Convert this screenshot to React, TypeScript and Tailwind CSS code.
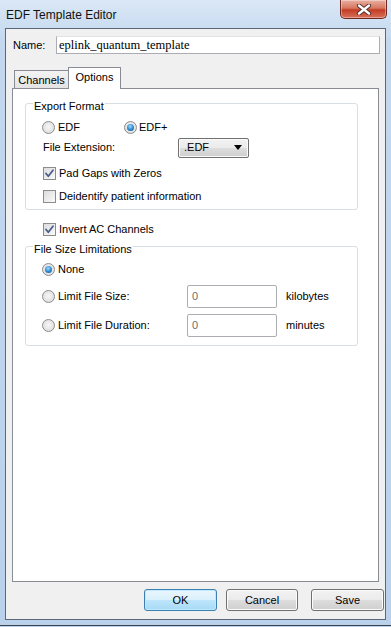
import React from "react";

const FONT = { fontFamily: '"Liberation Sans", Arial, sans-serif' };

function Radio({ checked }: { checked?: boolean }) {
  return (
    <span className="w-[13px] h-[13px] rounded-full border border-[#8c8c8c] bg-[radial-gradient(circle_at_50%_45%,#f6f6f6,#d8d8d8)] flex items-center justify-center shrink-0">
      {checked && (
        <span className="w-[7px] h-[7px] rounded-full bg-[radial-gradient(circle_at_45%_35%,#9ddcff,#2c86cc_55%,#0d4a80)]" />
      )}
    </span>
  );
}

function Check({ checked }: { checked?: boolean }) {
  return (
    <span className="w-[13px] h-[13px] border border-[#8c8c8c] bg-[linear-gradient(135deg,#dcdcdc,#fafafa)] flex items-center justify-center shrink-0">
      {checked && (
        <svg width="11" height="11" viewBox="0 0 11 11">
          <path d="M2 5.5 L4.3 8.3 L9 2.2" fill="none" stroke="#4a5d8c" strokeWidth="1.8" strokeLinecap="round" strokeLinejoin="round" />
        </svg>
      )}
    </span>
  );
}

function GrayButton({ label, w }: { label: string; w: string }) {
  return (
    <div className={`${w} h-[22px] rounded-[3px] border border-[#707070] bg-[linear-gradient(to_bottom,#f2f2f2,#ebebeb_50%,#dddddd_50%,#cfcfcf)] flex items-center justify-center text-[11px] text-black shadow-[inset_0_0_0_1px_#fcfcfc]`}>
      {label}
    </div>
  );
}

export default function App() {
  return (
    <div
      className="w-[391px] h-[627px] overflow-hidden flex flex-col bg-[linear-gradient(to_bottom,#dbe8f6,#c3d8ef_40px,#b9d1eb)] text-black"
      style={FONT}
    >
      {/* Title bar */}
      <div className="h-[28px] flex items-start justify-between shrink-0">
        <div className="pl-[6px] pt-[6px] text-[12px] text-[#111]">EDF Template Editor</div>
        <div className="mr-[4px] w-[47px] h-[19px] rounded-b-[5px] border border-t-0 border-[#6e2a22] bg-[linear-gradient(to_bottom,#e9b0a4,#d7775f_45%,#c43c25_55%,#d9715a)] flex items-center justify-center shadow-[inset_0_0_0_1px_rgba(255,255,255,0.35)]">
          <svg width="16" height="11" viewBox="0 0 16 11">
            <path d="M3 1.5 L13 9.5 M13 1.5 L3 9.5" stroke="#4a2a26" strokeWidth="4.2" strokeLinecap="round" />
            <path d="M3 1.5 L13 9.5 M13 1.5 L3 9.5" stroke="#ffffff" strokeWidth="2.4" strokeLinecap="round" />
          </svg>
        </div>
      </div>

      {/* Client */}
      <div className="ml-[5px] w-[381px] h-[592px] border border-[#5c6878] bg-[#f0f0f0] flex flex-col shrink-0">
        {/* Name row */}
        <div className="mt-[7px] flex items-center h-[18px]">
          <span className="pl-[7px] w-[50px] text-[11px]">Name:</span>
          <div className="w-[324px] h-[18px] border border-[#abadb3] border-t-[#e3e3e3] bg-white flex items-center pl-[2px] text-[12.5px]" style={{ fontFamily: '"Liberation Serif", "Times New Roman", serif' }}>
            eplink_quantum_template
          </div>
        </div>

        {/* Tabs */}
        <div className="mt-[13px] -mb-[1px] ml-[8px] flex items-end h-[22px]">
          <div className="w-[54px] h-[19px] border border-r-0 border-[#898c95] bg-[linear-gradient(to_bottom,#f3f3f3,#e3e3e3)] flex items-center justify-center text-[11px] pt-[1px]">
            Channels
          </div>
          <div className="relative z-10 w-[53px] h-[22px] border border-b-0 border-[#898c95] bg-white flex items-center justify-center text-[11px] pb-[2px]">
            Options
          </div>
        </div>

        {/* Panel */}
        <div className="ml-[6px] w-[367px] h-[494px] border border-[#898c95] bg-white flex flex-col">
          <fieldset className="mt-[4px] ml-[12px] w-[333px] border border-[#d5dfe5] rounded-[3px] px-0 pb-[5px]">
            <legend className="ml-[7px] px-[1px] pt-[6px] leading-[14px] text-[11px]">Export Format</legend>
            <div className="mt-[6px] pl-[16px] flex items-center h-[16px] text-[11px]">
              <div className="w-[82px] flex items-center gap-[3px]">
                <Radio />
                <span>EDF</span>
              </div>
              <div className="flex items-center gap-[2px]">
                <Radio checked />
                <span>EDF+</span>
              </div>
            </div>
            <div className="mt-[2px] pl-[17px] flex items-center h-[21px] text-[11px]">
              <span className="w-[135px]">File Extension:</span>
              <div className="w-[71px] h-[20px] rounded-[2px] border border-[#707070] bg-[linear-gradient(to_bottom,#f2f2f2,#ebebeb_50%,#dddddd_50%,#cfcfcf)] flex items-center justify-between pl-[5px] pr-[6px] shadow-[inset_0_0_0_1px_#fbfbfb]">
                <span>.EDF</span>
                <svg width="8" height="5" viewBox="0 0 8 5">
                  <path d="M0 0 H8 L4 5 Z" fill="#000" />
                </svg>
              </div>
            </div>
            <div className="mt-[7px] pl-[17px] flex items-center gap-[3px] h-[16px] text-[11px]">
              <Check checked />
              <span>Pad Gaps with Zeros</span>
            </div>
            <div className="mt-[7px] pl-[17px] flex items-center gap-[3px] h-[16px] text-[11px]">
              <Check />
              <span>Deidentify patient information</span>
            </div>
          </fieldset>

          <div className="mt-[12px] ml-[30px] flex items-center gap-[3px] h-[14px] text-[11px]">
            <Check checked />
            <span>Invert AC Channels</span>
          </div>

          <fieldset className="ml-[12px] w-[333px] border border-[#d5dfe5] rounded-[3px] px-0 pb-[8px]">
            <legend className="ml-[7px] px-[1px] pt-[6px] leading-[14px] text-[11px]">File Size Limitations</legend>
            <div className="mt-[5px] pl-[16px] flex items-center gap-[3px] h-[16px] text-[11px]">
              <Radio checked />
              <span>None</span>
            </div>
            <div className="mt-[8px] pl-[16px] flex items-center h-[23px] text-[11px]">
              <div className="w-[145px] flex items-center gap-[3px]">
                <Radio />
                <span>Limit File Size:</span>
              </div>
              <div className="w-[90px] h-[23px] border border-[#abadb3] rounded-[2px] bg-white flex items-center pl-[4px] pb-[1px] text-[#6d6d6d]">0</div>
              <span className="ml-[9px]">kilobytes</span>
            </div>
            <div className="mt-[6px] pl-[16px] flex items-center h-[23px] text-[11px]">
              <div className="w-[145px] flex items-center gap-[3px]">
                <Radio />
                <span>Limit File Duration:</span>
              </div>
              <div className="w-[90px] h-[23px] border border-[#abadb3] rounded-[2px] bg-white flex items-center pl-[4px] pb-[1px] text-[#6d6d6d]">0</div>
              <span className="ml-[9px]">minutes</span>
            </div>
          </fieldset>
        </div>

        {/* Buttons */}
        <div className="mt-[7px] ml-[138px] flex items-center">
          <div className="w-[73px] h-[22px] rounded-[3px] border border-[#3c7fb1] bg-[linear-gradient(to_bottom,#eaf6fd,#d9f0fc_50%,#bee6fd_50%,#a7d9f5)] flex items-center justify-center text-[11px] shadow-[inset_0_0_0_1px_#bfe9ff]">
            OK
          </div>
          <div className="ml-[9px]">
            <GrayButton label="Cancel" w="w-[72px]" />
          </div>
          <div className="ml-[13px]">
            <GrayButton label="Save" w="w-[73px]" />
          </div>
        </div>
      </div>

      <div className="mt-[5px] h-[1px] bg-[#3a4450] shrink-0" />
    </div>
  );
}
